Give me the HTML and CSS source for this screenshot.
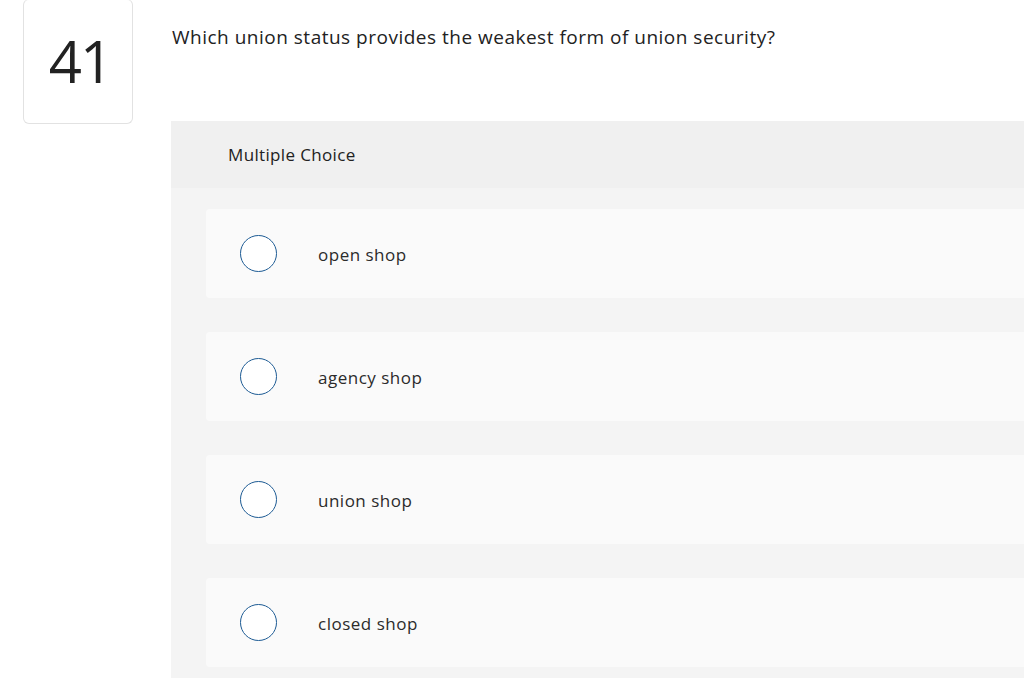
FILE: index.html
```html
<!doctype html>
<html lang="en">
<head>
  <meta charset="UTF-8">
  <title>Question 41</title>
  <link rel="stylesheet" href="styles.css">
</head>
<body>
<div class="page">
  <div class="qnum">41</div>
  <div class="qmain">
    <p class="prompt">Which union status provides the weakest form of union security?</p>
    <div class="panel">
      <div class="panel-head">Multiple Choice</div>
      <div class="choices">
        <label class="choice"><span class="radio"></span><span class="label">open shop</span></label>
        <label class="choice"><span class="radio"></span><span class="label">agency shop</span></label>
        <label class="choice"><span class="radio"></span><span class="label">union shop</span></label>
        <label class="choice"><span class="radio"></span><span class="label">closed shop</span></label>
      </div>
    </div>
  </div>
</div>
</body>
</html>
```

FILE: styles.css
```css
html, body {
  margin: 0;
  background: #fff;
  overflow: hidden;
}
body {
  font-family: "Open Sans", Lato, sans-serif;
  color: #222;
}
.page {
  display: flex;
  align-items: flex-start;
  padding-left: 23px;
  gap: 38px;
}
.qnum {
  flex: none;
  width: 110px;
  height: 125px;
  box-sizing: border-box;
  border: 1px solid #e2e2e2;
  border-top-color: #ececec;
  border-radius: 6px;
  margin-top: -1px;
  padding: 0 0 2px 4px;
  display: flex;
  align-items: center;
  justify-content: center;
  font-size: 58px;
  font-weight: 400;
  color: #222;
  letter-spacing: -2px;
}
.qmain {
  flex: none;
  width: 900px;
}
.prompt {
  margin: 25px 0 0 1px;
  font-size: 19px;
  line-height: 24px;
  letter-spacing: 0.5px;
  color: #222;
}
.panel {
  margin-top: 72px;
  background: #f4f4f4;
  padding-bottom: 11px;
}
.panel-head {
  background: #f0f0f0;
  height: 67px;
  display: flex;
  align-items: center;
  padding-left: 57px;
  font-size: 17px;
  letter-spacing: 0.35px;
  color: #222;
}
.choices {
  display: flex;
  flex-direction: column;
  gap: 34px;
  padding: 21px 0 0 35px;
}
.choice {
  display: flex;
  align-items: center;
  height: 89px;
  background: #fafafa;
  border-radius: 4px 0 0 4px;
  padding-left: 34px;
}
.radio {
  width: 35px;
  height: 35px;
  border: 1.5px solid #1d5b94;
  border-radius: 50%;
  background: #fff;
  flex: none;
}
.label {
  margin-left: 41px;
  padding-top: 2px;
  font-size: 17px;
  letter-spacing: 0.5px;
  color: #2b2b2b;
}
```
